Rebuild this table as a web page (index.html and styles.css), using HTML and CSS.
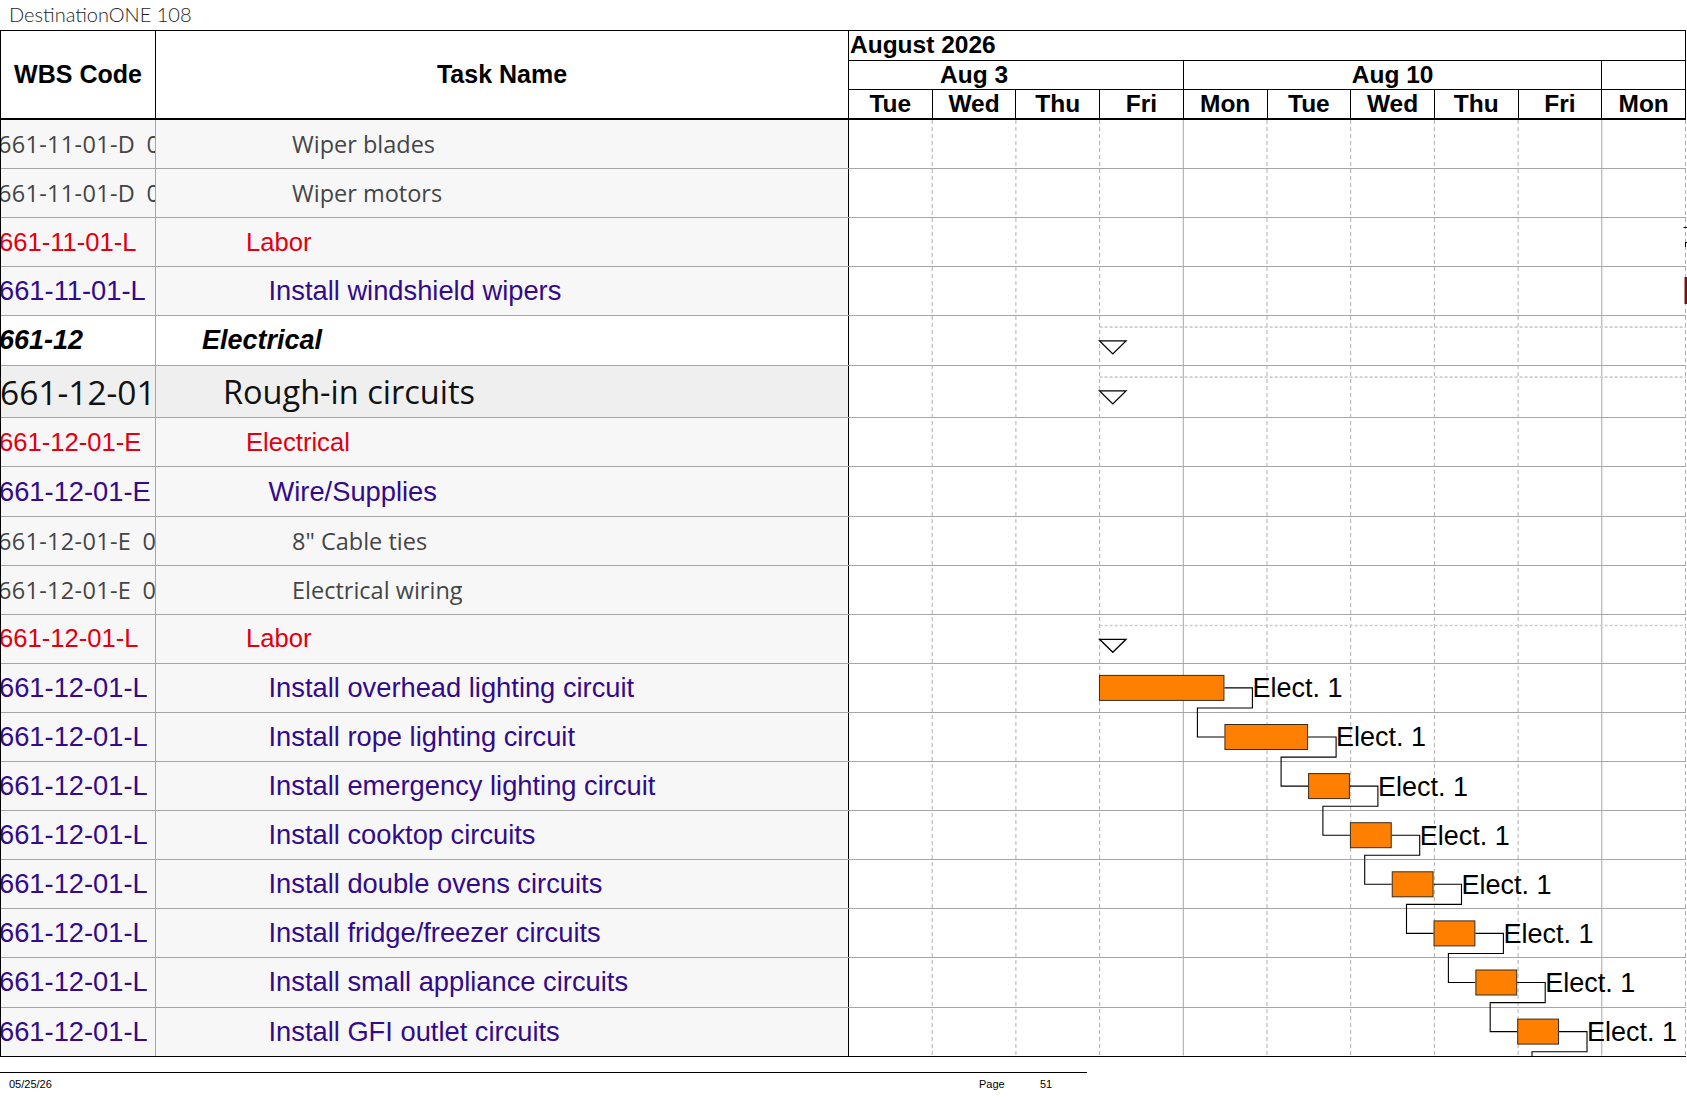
FILE: index.html
```html
<!DOCTYPE html>
<html lang="en">
<head>
<meta charset="utf-8">
<title>DestinationONE 108</title>
<link rel="stylesheet" href="styles.css">
</head>
<body>
<div class="title">DestinationONE 108</div>
<div class="sheet">
  <div class="head">
    <div class="hcell">WBS Code</div>
    <div class="hcell">Task Name</div>
    <div class="timescale">
      <div class="month">August 2026</div>
      <div class="weeks">
        <div class="week first">Aug 3</div>
        <div class="week">Aug 10</div>
        <div class="week"></div>
      </div>
      <div class="days">
        <div class="day">Tue</div><div class="day">Wed</div><div class="day">Thu</div><div class="day">Fri</div><div class="day">Mon</div>
        <div class="day">Tue</div><div class="day">Wed</div><div class="day">Thu</div><div class="day">Fri</div><div class="day">Mon</div>
      </div>
    </div>
  </div>
  <div class="body">
    <div class="row gray"><div class="wbs"><span>661-11-01-D 01</span></div><div class="name"><span>Wiper blades</span></div><div class="chart"></div></div>
    <div class="row gray"><div class="wbs"><span>661-11-01-D 02</span></div><div class="name"><span>Wiper motors</span></div><div class="chart"></div></div>
    <div class="row red"><div class="wbs"><span>661-11-01-L</span></div><div class="name"><span>Labor</span></div><div class="chart"></div></div>
    <div class="row purple"><div class="wbs"><span>661-11-01-L</span></div><div class="name"><span>Install windshield wipers</span></div><div class="chart"></div></div>
    <div class="row summary"><div class="wbs"><span>661-12</span></div><div class="name"><span>Electrical</span></div><div class="chart"></div></div>
    <div class="row big"><div class="wbs"><span>661-12-01</span></div><div class="name"><span>Rough-in circuits</span></div><div class="chart"></div></div>
    <div class="row red"><div class="wbs"><span>661-12-01-E</span></div><div class="name"><span>Electrical</span></div><div class="chart"></div></div>
    <div class="row purple"><div class="wbs"><span>661-12-01-E</span></div><div class="name"><span>Wire/Supplies</span></div><div class="chart"></div></div>
    <div class="row gray"><div class="wbs"><span>661-12-01-E 01</span></div><div class="name"><span>8" Cable ties</span></div><div class="chart"></div></div>
    <div class="row gray"><div class="wbs"><span>661-12-01-E 02</span></div><div class="name"><span>Electrical wiring</span></div><div class="chart"></div></div>
    <div class="row red"><div class="wbs"><span>661-12-01-L</span></div><div class="name"><span>Labor</span></div><div class="chart"></div></div>
    <div class="row purple"><div class="wbs"><span>661-12-01-L</span></div><div class="name"><span>Install overhead lighting circuit</span></div><div class="chart"></div></div>
    <div class="row purple"><div class="wbs"><span>661-12-01-L</span></div><div class="name"><span>Install rope lighting circuit</span></div><div class="chart"></div></div>
    <div class="row purple"><div class="wbs"><span>661-12-01-L</span></div><div class="name"><span>Install emergency lighting circuit</span></div><div class="chart"></div></div>
    <div class="row purple"><div class="wbs"><span>661-12-01-L</span></div><div class="name"><span>Install cooktop circuits</span></div><div class="chart"></div></div>
    <div class="row purple"><div class="wbs"><span>661-12-01-L</span></div><div class="name"><span>Install double ovens circuits</span></div><div class="chart"></div></div>
    <div class="row purple"><div class="wbs"><span>661-12-01-L</span></div><div class="name"><span>Install fridge/freezer circuits</span></div><div class="chart"></div></div>
    <div class="row purple"><div class="wbs"><span>661-12-01-L</span></div><div class="name"><span>Install small appliance circuits</span></div><div class="chart"></div></div>
    <div class="row purple last"><div class="wbs"><span>661-12-01-L</span></div><div class="name"><span>Install GFI outlet circuits</span></div><div class="chart"></div></div>

    <svg class="overlay" width="839" height="937" viewBox="0 0 839 937">
      <g class="vdash">
        <line x1="83.2" y1="0" x2="83.2" y2="935.5"/>
        <line x1="166.9" y1="0" x2="166.9" y2="935.5"/>
        <line x1="250.6" y1="0" x2="250.6" y2="935.5"/>
        <line x1="418" y1="0" x2="418" y2="935.5"/>
        <line x1="501.7" y1="0" x2="501.7" y2="935.5"/>
        <line x1="585.4" y1="0" x2="585.4" y2="935.5"/>
        <line x1="669.1" y1="0" x2="669.1" y2="935.5"/>
        <line x1="836.5" y1="0" x2="836.5" y2="935.5"/>
      </g>
      <g class="vsolid">
        <line x1="334.3" y1="0" x2="334.3" y2="935.5"/>
        <line x1="752.8" y1="0" x2="752.8" y2="935.5"/>
      </g>

      <g class="sumline">
        <line x1="250.6" y1="207.1" x2="837" y2="207.1"/>
        <line x1="250.6" y1="257.1" x2="837" y2="257.1"/>
        <line x1="250.6" y1="505.5" x2="837" y2="505.5"/>
      </g>
      <g class="tri">
        <polygon points="250.6,220.9 277,220.9 263.8,233.9"/>
        <polygon points="250.6,270.9 277,270.9 263.8,283.9"/>
        <polygon points="250.6,519.3 277,519.3 263.8,532.3"/>
      </g>

      <g class="edge">
        <path d="M834.5 107.5 H838 M836.5 122.5 H838 M836.5 122 V127"/>
      </g>
      <rect class="edgebar" x="835.5" y="157" width="3" height="27"/>

      <g class="links">
        <path d="M375.43 567.9 H403.4 V588 H348.4 V617 H375.43"/>
        <path d="M459.08 617 H487.1 V637.1 H432.1 V666.1 H459.08"/>
        <path d="M500.9 666.1 H528.9 V686.2 H473.9 V715.2 H500.9"/>
        <path d="M542.73 715.2 H570.7 V735.3 H515.7 V764.3 H542.73"/>
        <path d="M584.55 764.3 H612.5 V784.4 H557.5 V813.4 H584.55"/>
        <path d="M626.38 813.4 H654.4 V833.5 H599.4 V862.5 H626.38"/>
        <path d="M668.2 862.5 H696.2 V882.6 H641.2 V911.6 H668.2"/>
        <path d="M710.03 911.6 H738 V931.7 H683 V936"/>
      </g>

      <g class="bars">
        <rect x="250.45" y="555.4" width="124.48" height="25"/>
        <rect x="375.93" y="604.5" width="82.65" height="25"/>
        <rect x="459.58" y="653.6" width="40.82" height="25"/>
        <rect x="501.4" y="702.7" width="40.83" height="25"/>
        <rect x="543.23" y="751.8" width="40.82" height="25"/>
        <rect x="585.05" y="800.9" width="40.83" height="25"/>
        <rect x="626.88" y="850" width="40.82" height="25"/>
        <rect x="668.7" y="899.1" width="40.83" height="25"/>
      </g>

      <g class="labels">
        <text x="403.4" y="577.3">Elect. 1</text>
        <text x="487.1" y="626.4">Elect. 1</text>
        <text x="528.9" y="675.5">Elect. 1</text>
        <text x="570.7" y="724.6">Elect. 1</text>
        <text x="612.6" y="773.7">Elect. 1</text>
        <text x="654.4" y="822.8">Elect. 1</text>
        <text x="696.2" y="871.9">Elect. 1</text>
        <text x="738" y="921">Elect. 1</text>
      </g>
    </svg>
  </div>
</div>
<div class="footer">
  <span class="f-date">05/25/26</span>
  <span class="f-page">Page</span>
  <span class="f-num">51</span>
</div>
</body>
</html>
```

FILE: styles.css
```css
* {
  box-sizing: border-box;
}

body {
  margin: 0;
  width: 1687px;
  background: #ffffff;
  color: #000000;
  font-family: "Liberation Sans", Arial, sans-serif;
}

.title {
  height: 30px;
  padding: 2px 0 0 9px;
  font-family: Lato, "Open Sans", sans-serif;
  font-weight: 300;
  font-size: 20px;
  line-height: 25px;
  color: #1e1e1e;
  white-space: nowrap;
}

.sheet {
  width: 1686px;
  border-left: 1px solid #000000;
}

/* ---------- header ---------- */
.head {
  display: grid;
  grid-template-columns: 155px 693px 837px;
  height: 90px;
  border-top: 1px solid #000000;
  border-bottom: 2px solid #000000;
}

.hcell {
  display: flex;
  align-items: center;
  justify-content: center;
  border-right: 1px solid #000000;
  font-weight: bold;
  font-size: 25px;
  white-space: nowrap;
}

.timescale {
  display: flex;
  flex-direction: column;
  overflow: hidden;
}

.month {
  height: 29.5px;
  padding-left: 1px;
  border-bottom: 1px solid #000000;
  border-right: 1px solid #000000;
  font-weight: bold;
  font-size: 24.5px;
  line-height: 28.5px;
  white-space: nowrap;
}

.weeks {
  display: flex;
  height: 29.5px;
  border-bottom: 1px solid #000000;
  border-right: 1px solid #000000;
  overflow: hidden;
}

.week {
  flex: 0 0 418.5px;
  display: flex;
  align-items: center;
  justify-content: center;
  border-right: 1px solid #000000;
  font-weight: bold;
  font-size: 24.5px;
  white-space: nowrap;
}

.week.first {
  margin-left: -83.7px;
}

.days {
  display: flex;
  height: 28px;
}

.day {
  flex: 1 1 0;
  display: flex;
  align-items: center;
  justify-content: center;
  border-right: 1px solid #000000;
  font-weight: bold;
  font-size: 24.5px;
}

/* ---------- body rows ---------- */
.body {
  position: relative;
}

.row {
  display: grid;
  grid-template-columns: 155px 693px 837px;
  height: 49.1px;
  border-bottom: 1px solid #a6a6a6;
}

.row.last {
  border-bottom-color: #000000;
}

.wbs,
.name {
  display: flex;
  align-items: center;
  overflow: hidden;
  white-space: nowrap;
  background: #f7f7f7;
}

.wbs {
  border-right: 1px solid #a6a6a6;
}

.wbs span {
  margin-left: -2px;
}

.name {
  border-right: 1px solid #000000;
}

.chart {
  background: #ffffff;
}

/* gray detail rows */
.gray .wbs,
.gray .name {
  font-family: "Open Sans", "Noto Sans", sans-serif;
  font-size: 23.5px;
  color: #454545;
}

.gray .wbs span {
  margin-left: -3px;
  letter-spacing: 0.3px;
  word-spacing: 5px;
}

.gray .name {
  padding-left: 136px;
}

/* red resource-group rows */
.red .wbs,
.red .name {
  font-size: 25.6px;
  color: #e2000f;
}

.red .name {
  padding-left: 90px;
}

/* purple task rows */
.purple .wbs,
.purple .name {
  font-size: 27.3px;
  color: #330a8c;
}

.purple .name {
  padding-left: 112.5px;
}

/* bold italic summary row */
.row.summary {
  height: 50px;
}

.summary .wbs,
.summary .name {
  background: #ffffff;
  font-size: 27px;
  font-weight: bold;
  font-style: italic;
}

.summary .name {
  padding-left: 46px;
}

/* large summary row */
.row.big {
  height: 52px;
}

.big .wbs,
.big .name {
  background: #efefef;
  font-family: "Open Sans", "Noto Sans", sans-serif;
  color: #111111;
}

.big .wbs {
  font-size: 33.5px;
}

.big .name {
  padding-left: 67px;
  font-size: 32.5px;
}

.big .wbs span {
  margin-left: -1px;
}

/* ---------- gantt overlay ---------- */
.overlay {
  position: absolute;
  left: 848px;
  top: 0;
  overflow: visible;
}

.vdash line {
  stroke: #b0b0b0;
  stroke-width: 1;
  stroke-dasharray: 4 3;
}

.vsolid line {
  stroke: #a6a6a6;
  stroke-width: 1;
}

.sumline line {
  stroke: #cdcdcd;
  stroke-width: 1.6;
  stroke-dasharray: 3 2;
}

.tri polygon {
  fill: #ffffff;
  stroke: #000000;
  stroke-width: 1.3;
}

.edge path {
  fill: none;
  stroke: #000000;
  stroke-width: 1;
}

.edgebar {
  fill: #7a1010;
}

.links path {
  fill: none;
  stroke: #000000;
  stroke-width: 1.1;
}

.bars rect {
  fill: #ff8000;
  stroke: #3a2a1a;
  stroke-width: 1;
}

.labels text {
  font-family: "Liberation Sans", Arial, sans-serif;
  font-size: 27px;
  fill: #000000;
}

/* ---------- footer ---------- */
.footer {
  display: flex;
  width: 1087px;
  margin-top: 15px;
  padding-top: 5px;
  border-top: 1px solid #000000;
  font-family: "Liberation Sans", Arial, sans-serif;
  font-size: 11px;
  line-height: 13px;
  color: #000000;
}

.f-date {
  width: 979px;
  padding-left: 9px;
}

.f-page {
  width: 61px;
}
```
